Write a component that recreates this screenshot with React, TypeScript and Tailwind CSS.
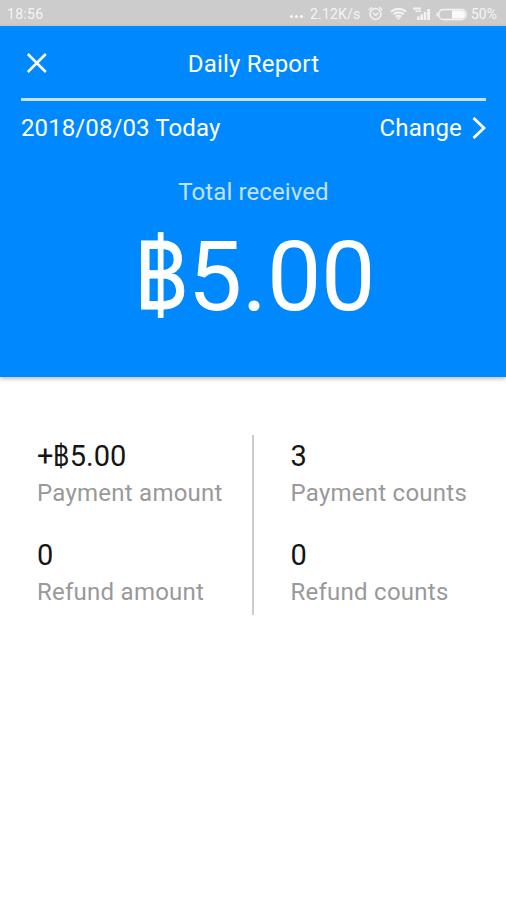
import type { ReactNode } from "react";

function StatusBar() {
  return (
    <div className="flex h-[26px] items-center bg-[#cccccc] pl-[7px] pr-[8px] pt-[2px] text-[14px] leading-[16px] text-[#f5f5f5]">
      <span className="flex-1 tracking-[0.3px]">18:56</span>
      <svg width="16" height="16" viewBox="0 0 16 16" fill="#f8f8f8">
        <circle cx="2.5" cy="10.5" r="1.6" />
        <circle cx="7.5" cy="10.5" r="1.6" />
        <circle cx="12.5" cy="10.5" r="1.6" />
      </svg>
      <span className="ml-[5px] w-[51px] whitespace-nowrap text-[14px] tracking-[0.2px]">2.12K/s</span>
      <svg className="ml-[7px]" width="15" height="16" viewBox="0 0 15 16" fill="none" stroke="#f3f3f3" strokeWidth="1.5">
        <circle cx="7.5" cy="8" r="5.4" />
        <path d="M.8 4 4 1.200M14.200 4 11 1.200M5 6.800l2.500 2.400L10.300 6.800" />
      </svg>
      <svg className="ml-[7px]" width="17" height="14" viewBox="0 0 17 14" fill="none" stroke="#f3f3f3" strokeWidth="2.100">
        <path d="M1 4.600Q8.500-.8 16 4.600M3.400 7.200Q8.500 3.500 13.600 7.200M5.700 9.700Q8.500 7.700 11.300 9.700" />
        <path d="M8.500 13 6.500 10.500h4Z" fill="#f3f3f3" stroke="none" />
      </svg>
      <svg className="ml-[6px]" width="18" height="14" viewBox="0 0 18 14" fill="#f3f3f3">
        <path d="M0 .5h8v2H0ZM2.500 3.500H8v1.500H2.500ZM4 9.500h2.500V13H4ZM7.300 7.500H10V13H7.300ZM10.800 5h2.500v8h-2.500ZM14.200 2H17v11h-2.800Z" />
      </svg>
      <svg className="ml-[5px]" width="31" height="13" viewBox="0 0 31 13">
        <rect x="3" y="1.500" width="27" height="10" rx="4" fill="none" stroke="#f3f3f3" strokeWidth="1.300" />
        <path d="M16 2.500h10q3 0 3 4t-3 4H16Z" fill="#fafafa" />
        <rect x="0.500" y="4.500" width="2" height="4" rx="1" fill="#f3f3f3" />
      </svg>
      <span className="ml-[4px] w-[27px] whitespace-nowrap">50%</span>
    </div>
  );
}

function Baht() {
  return (
    <span className="-mr-[0.095em] inline-block origin-left scale-x-[0.86] scale-y-[0.96] font-[Inter,sans-serif] leading-none">฿</span>
  );
}

function Metric({ value, label }: { value: ReactNode; label: string }) {
  return (
    <div className="h-[99px]">
      <div className="h-[38px] text-[29px] leading-[38px] text-[#151515]">{value}</div>
      <div className="h-[36px] whitespace-nowrap text-[24px] leading-[36px] tracking-[0.25px] text-[#999999]">{label}</div>
    </div>
  );
}

export default function App() {
  return (
    <main className="flex h-[900px] w-[506px] flex-col overflow-hidden bg-white font-[Roboto,'Noto_Sans',sans-serif]">
      <StatusBar />
      <header className="h-[351px] shrink-0 bg-[#0089ff] pl-[21px] pr-[20px] text-white shadow-[0_2px_4px_rgba(0,0,0,0.25)]">
        <div className="grid h-[72px] grid-cols-[32px_1fr_32px] items-center pt-[3px]">
          <svg className="ml-[5px]" width="21" height="21" viewBox="0 0 21 21" fill="none" stroke="white" strokeWidth="2.500">
            <path d="M1.800 1 19.800 19M19.800 1 1.800 19" />
          </svg>
          <h1 className="text-center text-[24px] leading-[32px] tracking-[0.200px]">Daily Report</h1>
        </div>
        <div className="h-[2.500px] bg-[#c3e0ff]" />
        <div className="flex h-[54px] items-center justify-between text-[24px] leading-[32px] tracking-[0.100px]">
          <span>2018/08/03 Today</span>
          <button className="flex items-center gap-[10px] tracking-[0.200px]">
            <span>Change</span>
            <svg width="14" height="22" viewBox="0 0 14 22" fill="none" stroke="white" strokeWidth="2.800">
              <path d="M1.500 1 12 11 1.500 21" />
            </svg>
          </button>
        </div>
        <div className="mt-[21px] text-center text-[24px] leading-[32px] tracking-[0.100px] text-[#c4e2ff]">Total received</div>
        <div className="mt-[18px] pl-[2px] text-center text-[97px] leading-[100px] tracking-[-0.4px]">
          <span className="[-webkit-text-stroke:0.8px_white]"><Baht /></span>5.00
        </div>
      </header>
      <section className="mt-[58px] grid h-[180px] grid-cols-[254px_1fr]">
        <div className="h-[180px] border-r-[2px] border-[#cccccc] pl-[37px] pt-[2px]">
          <div className="h-[178px]">
            <Metric value={<>+<Baht />5.00</>} label="Payment amount" />
            <Metric value="0" label="Refund amount" />
          </div>
        </div>
        <div className="pl-[36.5px] pt-[2px]">
          <Metric value="3" label="Payment counts" />
          <Metric value="0" label="Refund counts" />
        </div>
      </section>
    </main>
  );
}
